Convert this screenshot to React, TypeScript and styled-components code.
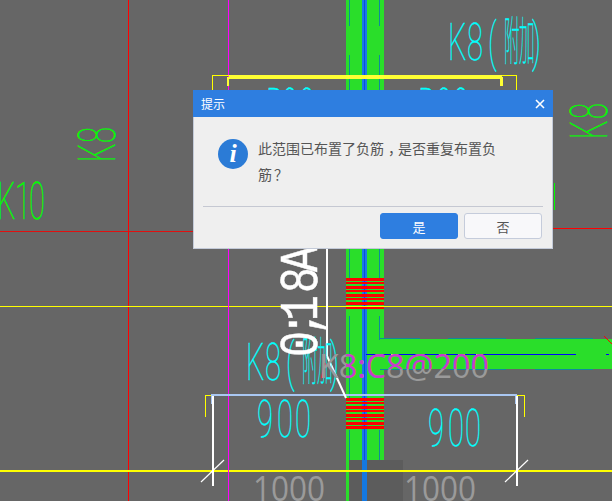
import React from "react";
import styled, { createGlobalStyle } from "styled-components";

const Global = createGlobalStyle`
  html, body { margin: 0; padding: 0; background: #666; }
  body { font-family: "Liberation Sans", "Noto Sans CJK SC", sans-serif; }
`;

const Page = styled.div`
  position: relative;
  width: 612px;
  height: 501px;
  overflow: hidden;
  background: #666666;
`;

const Canvas = styled.svg`
  display: block;
  shape-rendering: crispEdges;
`;

const Smooth = styled.g`
  shape-rendering: auto;
`;

const CadText = styled.text<{ $tone: string }>`
  font-family: Roboto, "Noto Sans CJK SC", sans-serif;
  font-weight: 100;
  fill: ${(p) => p.$tone};
  stroke: ${(p) => p.$tone};
  stroke-width: 0.4px;
`;

const GreyText = styled.text<{ $tone: string }>`
  font-family: "Open Sans", "Liberation Sans", sans-serif;
  font-weight: 400;
  fill: ${(p) => p.$tone};
`;

const LeaderText = styled.text`
  font-family: "Liberation Mono", monospace;
  font-weight: 400;
  fill: #ffffff;
  stroke: #ffffff;
  stroke-width: 0.5px;
`;

const Dialog = styled.div`
  position: absolute;
  left: 193px;
  top: 90px;
  width: 360px;
  height: 159px;
  box-sizing: border-box;
  display: flex;
  flex-direction: column;
  background: #efefef;
  border: 1px solid #c3cad8;
  border-top: 0;
`;

const Header = styled.div`
  height: 27px;
  margin: 0 -1px;
  padding: 0 8px;
  flex: none;
  display: flex;
  align-items: center;
  justify-content: space-between;
  background: #2e7ee0;
  color: #fff;
  font: 12px "Noto Sans CJK SC", sans-serif;
`;

const Close = styled.svg`
  display: block;
`;

const Body = styled.div`
  height: 89px;
  flex: none;
  box-sizing: border-box;
  padding: 18px 0 0 24px;
  display: flex;
  gap: 10px;
`;

const InfoIcon = styled.div`
  width: 30px;
  height: 30px;
  margin-top: 4px;
  flex: none;
  border-radius: 50%;
  background: #2b7bd6;
  color: #fff;
  display: flex;
  align-items: center;
  justify-content: center;
  font: italic 700 26px "Liberation Serif", serif;
`;

const Message = styled.div`
  width: 240px;
  color: #555;
  font: 14px/26px "Noto Sans CJK SC", sans-serif;
`;

const Punct = styled.span<{ $shift: number }>`
  padding-left: ${(p) => p.$shift}px;
  margin-right: -${(p) => p.$shift}px;
`;

const Footer = styled.div`
  margin: 0 9px;
  padding-top: 6px;
  border-top: 1px solid #c5c8d2;
  display: flex;
  justify-content: flex-end;
  gap: 6px;
  padding-right: 1px;
`;

const Button = styled.button<{ $primary?: boolean }>`
  width: 78px;
  height: 26px;
  padding: 0;
  box-sizing: border-box;
  border-radius: 3px;
  border: 1px solid ${(p) => (p.$primary ? "#2e7ee0" : "#c5ccdb")};
  background: ${(p) => (p.$primary ? "#2e7ee0" : "#f8f8fa")};
  color: ${(p) => (p.$primary ? "#fff" : "#555")};
  font: 13px "Noto Sans CJK SC", sans-serif;
`;

const GREEN = "#2ade2a";
const TEAL = "#0f8a9a";
const CYAN = "#00ffff";
const LIME = "#00ff00";
const stripes: [number, number][] = [
  [0, 3], [4, 2], [8, 3], [12, 2], [16, 3], [20, 2], [24, 3], [28, 3],
];
const teal: [number, number, number, number][] = [
  [349, 0, 349, 26], [379, 0, 379, 26], [349, 55, 349, 90], [379, 55, 379, 90],
  [349, 248, 349, 278], [379, 248, 379, 278], [349, 316, 349, 398], [379, 316, 379, 340],
  [349, 430, 349, 460], [379, 430, 379, 460],
];

/* CAD stick-font lettering: narrow glyphs placed one by one, in page pixels. */
const Glyphs = ({ text, at, tone, sx = 0.56 }: { text: string; at: number[]; tone: string; sx?: number }) => (
  <CadText $tone={tone} fontSize={52} transform={`scale(${sx} 1)`} x={at.map((v) => v / sx).join(" ")} y={0}>
    {text}
  </CadText>
);

const KLabel = ({ x, y }: { x: number; y: number }) => (
  <g transform={`translate(${x} ${y})`}>
    <Glyphs text="K8(" at={[0, 19, 40]} tone={CYAN} />
    <Glyphs text="附加" at={[56, 71]} tone={CYAN} sx={0.3} />
    <Glyphs text=")" at={[84]} tone={CYAN} />
  </g>
);

const CAD = () => (
  <Canvas width={612} height={501} viewBox="0 0 612 501">
    <defs>
      <clipPath id="over-green">
        <rect x={346} y={280} width={38} height={150} />
        <rect x={380} y={339} width={232} height={30} />
      </clipPath>
    </defs>
    <rect x={128} y={0} width={1} height={501} fill="#ff0000" />
    <rect x={0} y={231} width={193} height={1} fill="#e01010" />
    <rect x={553} y={228} width={59} height={1} fill="#ff0000" />
    <rect x={554} y={183} width={1} height={27} fill={LIME} />

    <rect x={346} y={0} width={38} height={460} fill={GREEN} />
    <rect x={346} y={460} width={3} height={41} fill={GREEN} />
    <rect x={380} y={339} width={232} height={30} fill={GREEN} />
    {[338, 369].map((y) =>
      [[380, 40], [448, 58], [535, 58]].map(([x, w]) => (
        <rect key={`${y}-${x}`} x={x} y={y} width={w} height={1} fill={TEAL} />
      ))
    )}
    {teal.map(([x1, y1, x2, y2], i) => (
      <line key={i} x1={x1 + 0.5} y1={y1} x2={x2 + 0.5} y2={y2} stroke={TEAL} strokeWidth={1} />
    ))}
    <rect x={349} y={460} width={54} height={41} fill="#5c5c5c" />
    <rect x={362} y={0} width={5} height={460} fill="#1a78e8" />
    <rect x={364} y={0} width={1} height={460} fill="#0a50d8" />
    <rect x={362} y={460} width={5} height={41} fill="#1478e0" />
    <rect x={366} y={354} width={210} height={1} fill="#0000ff" />
    <rect x={606} y={354} width={3} height={1} fill="#0000ff" />
    {[391, 439, 458, 476].map((x) => (
      <rect key={x} x={x} y={354} width={7} height={1} fill="#ffff00" />
    ))}

    {[278, 398].map((y) =>
      stripes.map(([d, h]) => <rect key={y + d} x={346} y={y + d} width={38} height={h} fill="#ff0000" />)
    )}
    <rect x={0} y={306} width={612} height={1} fill="#ffff00" />
    <rect x={0} y={470} width={612} height={2} fill="#ffff00" />
    <rect x={228} y={0} width={1} height={501} fill="#ff00ff" />

    <rect x={212} y={75} width={304} height={1} fill="#ffff00" />
    <rect x={212} y={75} width={1} height={20} fill="#ffff00" />
    <rect x={516} y={75} width={1} height={20} fill="#ffff00" />
    <rect x={229} y={75} width={273} height={4} fill="#ffff33" />
    <rect x={227} y={77} width={2} height={9} fill="#ffff33" />
    <rect x={500} y={77} width={3} height={9} fill="#ffff33" />

    <rect x={205} y={395} width={1} height={22} fill="#ffff00" />
    <rect x={524} y={395} width={1} height={22} fill="#ffff00" />
    <rect x={205} y={395} width={8} height={1} fill="#ffff00" />
    <rect x={517} y={395} width={8} height={1} fill="#ffff00" />
    <rect x={211} y={394} width={306} height={2} fill="#a9c7f2" />
    <rect x={211} y={396} width={2} height={8} fill="#a9c7f2" />
    <rect x={515} y={396} width={2} height={8} fill="#a9c7f2" />
    <rect x={212} y={396} width={2} height={90} fill="#ffffff" />
    <rect x={516} y={396} width={2} height={90} fill="#ffffff" />
    <rect x={326} y={240} width={2} height={116} fill="#ffffff" />

    <Smooth>
      <line x1={201} y1={482} x2={224} y2={460} stroke="#fff" strokeWidth={1.2} />
      <line x1={505} y1={482} x2={528} y2={460} stroke="#fff" strokeWidth={1.2} />
      <line x1={327} y1={356} x2={346} y2={398} stroke="#fff" strokeWidth={2} />
      <line x1={604} y1={336} x2={612} y2={344} stroke="#ff0000" strokeWidth={1} />
      <line x1={325} y1={363} x2={322} y2={378} stroke="#ee2020" strokeWidth={2} />

      <g transform="translate(0 219)">
        <Glyphs text="K10" at={[-3, 15, 29]} tone={LIME} />
      </g>
      <g transform="translate(115 161) rotate(-90)">
        <Glyphs text="K8" at={[-1, 18]} tone={LIME} />
      </g>
      <g transform="translate(607 138) rotate(-90)">
        <Glyphs text="K8" at={[-1, 19]} tone={LIME} />
      </g>

      <KLabel x={448} y={60} />
      <KLabel x={246} y={380} />
      <g transform="translate(0 125)">
        <Glyphs text="B00" at={[266, 282, 299]} tone={CYAN} />
        <Glyphs text="B00" at={[418, 436, 453]} tone={CYAN} />
      </g>
      <g transform="translate(0 437)">
        <Glyphs text="900" at={[257, 277, 295]} tone={CYAN} />
      </g>
      <g transform="translate(0 446)">
        <Glyphs text="900" at={[428, 448, 465]} tone={CYAN} />
      </g>

      <g transform="translate(317 355) rotate(-90) scale(0.8 1)">
        <LeaderText fontSize={54} x={[-2, 18, 34, 62, 83].map((v) => v / 0.8).join(" ")} y={0}>
          0;18A
        </LeaderText>
      </g>

      <GreyText $tone="#9a9a9a" x={319} y={378} fontSize={32} textLength={170} lengthAdjust="spacingAndGlyphs">K8:C8@200</GreyText>
      <g clipPath="url(#over-green)">
        <GreyText $tone="#c83ccc" x={319} y={378} fontSize={32} textLength={170} lengthAdjust="spacingAndGlyphs">K8:C8@200</GreyText>
      </g>
      <GreyText $tone="#9a9a9a" x={253} y={501} fontSize={34} textLength={72} lengthAdjust="spacingAndGlyphs">1000</GreyText>
      <GreyText $tone="#9a9a9a" x={404} y={501} fontSize={34} textLength={72} lengthAdjust="spacingAndGlyphs">1000</GreyText>
    </Smooth>
  </Canvas>
);

export default function App() {
  return (
    <Page>
      <Global />
      <CAD />
      <Dialog>
        <Header>
          <span>提示</span>
          <Close width={10} height={10} viewBox="0 0 10 10">
            <path d="M1 1 L9 9 M9 1 L1 9" stroke="#fff" strokeWidth={1.6} fill="none" />
          </Close>
        </Header>
        <Body>
          <InfoIcon>i</InfoIcon>
          <Message>
            此范围已布置了负筋<Punct $shift={4}>，</Punct>是否重复布置负筋<Punct $shift={2}>？</Punct>
          </Message>
        </Body>
        <Footer>
          <Button $primary>是</Button>
          <Button>否</Button>
        </Footer>
      </Dialog>
    </Page>
  );
}
